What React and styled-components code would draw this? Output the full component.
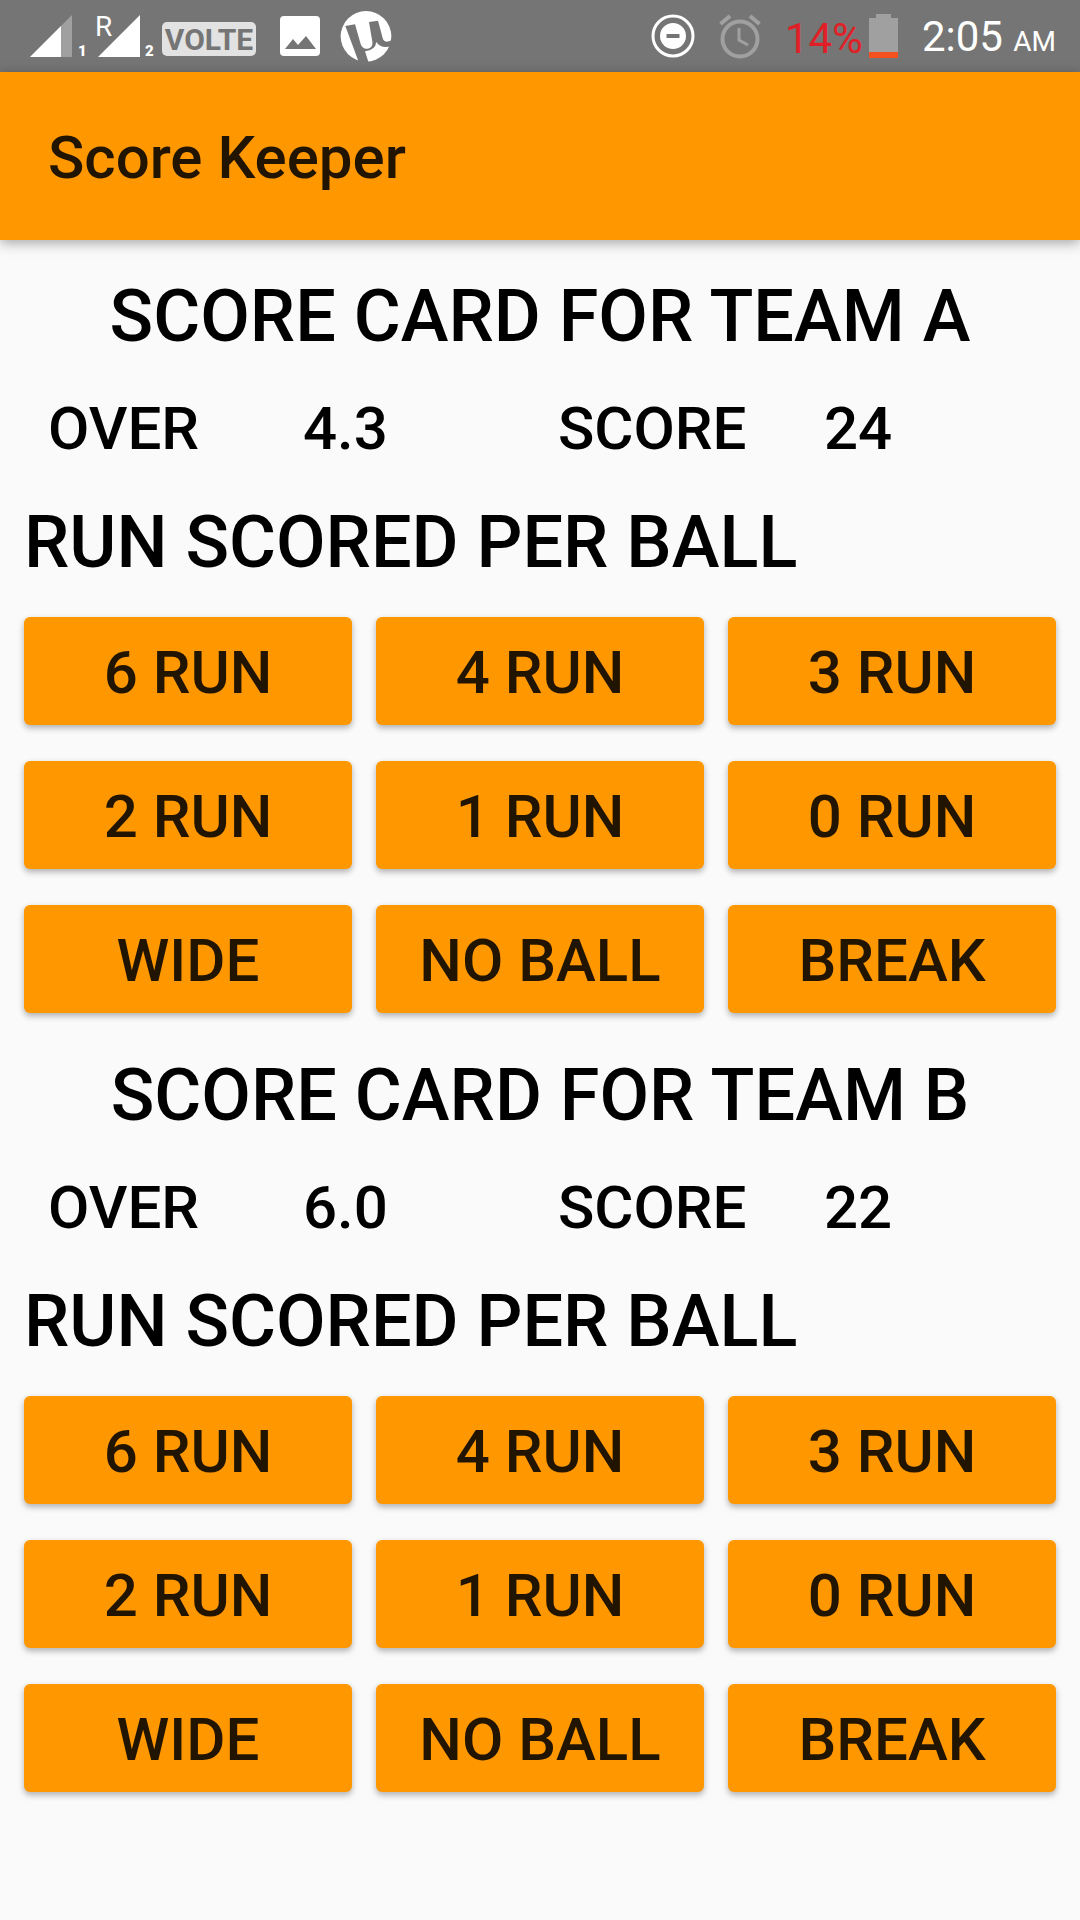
import React from "react";
import styled, { createGlobalStyle } from "styled-components";

const GlobalStyle = createGlobalStyle`
  * { box-sizing: border-box; }
  body {
    margin: 0;
    background: #fafafa;
    color: #000;
    font-family: Roboto, "Liberation Sans", sans-serif;
  }
`;

const StatusBar = styled.div`
  display: flex;
  align-items: center;
  justify-content: space-between;
  height: 72px;
  padding: 0 24px 0 30px;
  background: #757575;
  color: #fff;
`;

const StatusGroup = styled.div`
  display: flex;
  align-items: center;
  gap: ${(p) => p.$gap}px;
`;

const Volte = styled.span`
  width: 94px;
  margin-top: 6px;
  padding-top: 2px;
  border-radius: 5px;
  background: #e2e2e2;
  color: #757575;
  font-size: 30px;
  font-weight: 700;
  line-height: 32px;
  text-align: center;
`;

const Battery = styled.div`
  display: flex;
  align-items: center;
  gap: 6px;
  color: #e01f26;
`;

const StatusText = styled.span`
  padding-top: 6px;
  font-size: 42px;
  line-height: 50px;
  white-space: nowrap;
`;

const Meridiem = styled.span`
  font-size: 28px;
`;

const Icon = styled.svg`
  display: block;
  flex: none;
  overflow: visible;
`;

const AppBar = styled.header`
  display: flex;
  align-items: center;
  height: 168px;
  padding: 4px 48px 0;
  background: #ff9800;
  box-shadow: 0 3px 12px rgba(0, 0, 0, 0.34);
`;

const AppTitle = styled.h1`
  margin: 0;
  color: rgba(0, 0, 0, 0.87);
  font-size: 60px;
  font-weight: 500;
  line-height: 72px;
`;

const Main = styled.main`
  display: flex;
  flex-direction: column;
  gap: 40px;
  padding: 34px 24px;
`;

const Card = styled.section`
  display: flex;
  flex-direction: column;
`;

const Heading = styled.h2`
  margin: 0;
  font-size: 72px;
  font-weight: 500;
  line-height: 86px;
  text-align: ${(p) => (p.$centered ? "center" : "left")};
`;

const Stats = styled.dl`
  display: grid;
  grid-template-columns: 255fr 255fr 266fr 232fr;
  margin: 32px 0 34px;
  padding-left: 24px;
  font-size: 60px;
  font-weight: 500;
  line-height: 74px;
`;

const StatLabel = styled.dt``;

const StatValue = styled.dd`
  margin: 0;
`;

const ButtonGrid = styled.div`
  display: grid;
  grid-template-columns: repeat(3, 1fr);
  gap: 36px 24px;
  margin-top: 31px;
`;

const RunButton = styled.button`
  height: 108px;
  padding: 4px 0 0;
  border: 0;
  border-radius: 6px;
  background: #ff9800;
  box-shadow: 0 3px 6px rgba(0, 0, 0, 0.3);
  color: rgba(0, 0, 0, 0.87);
  font: 500 60px/72px Roboto, "Liberation Sans", sans-serif;
  cursor: pointer;
`;

const ACTIONS = ["6 RUN", "4 RUN", "3 RUN", "2 RUN", "1 RUN", "0 RUN", "WIDE", "NO BALL", "BREAK"];

const TEAMS = [
  { name: "A", over: "4.3", score: "24" },
  { name: "B", over: "6.0", score: "22" },
];

function Signal({ sim, roaming, weak }) {
  return (
    <Icon width="58" height="58" viewBox="0 -6 58 58" fill="#fff">
      {weak ? (
        <>
          <path d="M0 44 42 2v42z" fill="#a0a0a0" />
          <path d="M0 44 31 13v31z" />
        </>
      ) : (
        <path d="M2 44 44 2v42z" />
      )}
      {roaming && <text x="-1" y="23" fontSize="28">R</text>}
      <text x={weak ? 48 : 49} y="43" fontSize="15" fontWeight="900">{sim}</text>
    </Icon>
  );
}

function PictureIcon() {
  return (
    <Icon width="40" height="40" viewBox="0 0 40 40">
      <rect width="40" height="40" rx="4" fill="#fff" />
      <path d="M5 33 13 23l5 6 8-9 10 13z" fill="#757575" />
    </Icon>
  );
}

function TorrentIcon() {
  return (
    <Icon width="52" height="52" viewBox="0 0 156 156">
      <circle cx="78" cy="79" r="76" fill="#fff" />
      <path
        d="M16 48 45 43 62 102Q68 119 84 116 100 112 97 95L87 36 114 32 129 88Q135 101 156 90V107Q136 115 121 107 113 103 109 96 106 121 75 124L86 158H57Z"
        fill="#757575"
      />
    </Icon>
  );
}

function DisturbIcon() {
  return (
    <Icon width="44" height="44" viewBox="0 0 44 44">
      <circle cx="22" cy="22" r="20" fill="none" stroke="#fff" strokeWidth="3" />
      <circle cx="22" cy="22" r="13" fill="#fff" />
      <path d="M15.500 22h13" stroke="#757575" strokeWidth="4" />
    </Icon>
  );
}

function AlarmIcon() {
  return (
    <Icon width="42" height="44" viewBox="0 0 42 44" fill="none" stroke="#a0a0a0">
      <circle cx="21" cy="25" r="17.500" strokeWidth="4" />
      <path d="M1.500 10 11 2M31 2l9.500 8" strokeWidth="4" />
      <path d="M20 14v12l9 5" strokeWidth="3" />
    </Icon>
  );
}

function BatteryIcon() {
  return (
    <Icon width="29" height="44" viewBox="0 0 29 44">
      <path d="M7 0h15v4h7v40H0V4h7z" fill="#a0a0a0" />
      <path d="M0 38h29v6H0z" fill="#f4511e" />
    </Icon>
  );
}

function ScoreCard({ team }) {
  return (
    <Card>
      <Heading $centered>SCORE CARD FOR TEAM {team.name}</Heading>
      <Stats>
        <StatLabel>OVER</StatLabel>
        <StatValue>{team.over}</StatValue>
        <StatLabel>SCORE</StatLabel>
        <StatValue>{team.score}</StatValue>
      </Stats>
      <Heading as="h3">RUN SCORED PER BALL</Heading>
      <ButtonGrid>
        {ACTIONS.map((label) => (
          <RunButton key={label} type="button">{label}</RunButton>
        ))}
      </ButtonGrid>
    </Card>
  );
}

export default function App() {
  return (
    <>
      <GlobalStyle />
      <StatusBar>
        <StatusGroup $gap={24}>
          <StatusGroup $gap={8}>
            <Signal sim="1" weak />
            <Signal sim="2" roaming />
            <Volte>VOLTE</Volte>
          </StatusGroup>
          <StatusGroup $gap={20}>
            <PictureIcon />
            <TorrentIcon />
          </StatusGroup>
        </StatusGroup>
        <StatusGroup $gap={24}>
          <DisturbIcon />
          <AlarmIcon />
          <Battery>
            <StatusText>14%</StatusText>
            <BatteryIcon />
          </Battery>
          <StatusText as="time">
            2:05 <Meridiem>AM</Meridiem>
          </StatusText>
        </StatusGroup>
      </StatusBar>
      <AppBar>
        <AppTitle>Score Keeper</AppTitle>
      </AppBar>
      <Main>
        {TEAMS.map((team) => (
          <ScoreCard key={team.name} team={team} />
        ))}
      </Main>
    </>
  );
}
